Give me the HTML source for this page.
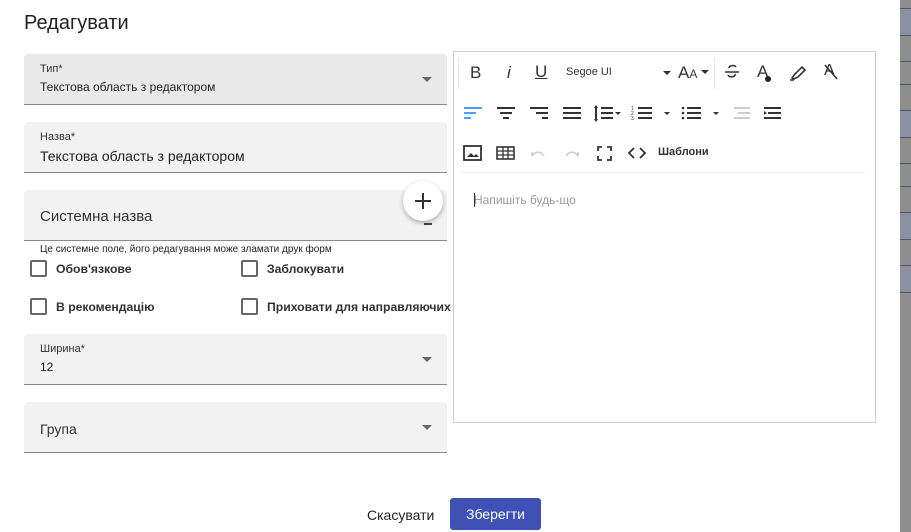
<!DOCTYPE html>
<html><head><meta charset="utf-8"><style>
*{box-sizing:border-box}
body{margin:0;width:911px;height:532px;overflow:hidden;background:#fff;font-family:"Liberation Sans",Arial,sans-serif;color:#212121;position:relative}
.strip{position:absolute;left:900px;top:0;width:11px;height:532px;background:#8e8e8e}
.strip i{position:absolute;left:0;width:11px;height:1px;background:#4d5670}
.strip b{position:absolute;left:0;width:11px;background:#8b919e}
h1{position:absolute;left:24px;top:12px;margin:0;font-size:20px;font-weight:400;color:#212121}
.f{position:absolute;left:24px;width:423px;height:51px;background:#f2f2f2;border-bottom:1px solid #8a8a8a;border-radius:4px 4px 0 0}
.f .l{position:absolute;left:16px;top:9px;font-size:11px;color:#333}
.f .v{position:absolute;left:16px;top:26px;font-size:13px;color:#222}
.f .p{position:absolute;left:16px;top:18px;font-size:15px;color:#333}
.arr{position:absolute;right:15px;top:23px;width:0;height:0;border-left:5px solid transparent;border-right:5px solid transparent;border-top:5px solid #666}
.cb{position:absolute;width:17px;height:17px;border:2px solid #666;border-radius:2px}
.cl{position:absolute;font-size:12.2px;font-weight:bold;color:#333}
.ed{position:absolute;left:453px;top:51px;width:423px;height:372px;border:1px solid #cfcfcf}
.tb{position:absolute;font-size:18px;color:#333}
svg{position:absolute}
.fab{position:absolute;left:403px;top:181px;width:40px;height:40px;border-radius:50%;background:#fff;box-shadow:0 2px 5px rgba(0,0,0,.3)}
</style></head><body>
<div class="strip">
<b style="top:8px;height:27px"></b><b style="top:110px;height:27px"></b><b style="top:212px;height:27px"></b><b style="top:265px;height:27px"></b>
<i style="top:8px"></i><i style="top:35px"></i><i style="top:61px"></i><i style="top:84px"></i><i style="top:110px"></i><i style="top:137px"></i><i style="top:163px"></i><i style="top:186px"></i><i style="top:212px"></i><i style="top:239px"></i><i style="top:265px"></i><i style="top:292px"></i>
</div>
<h1>Редагувати</h1>
<div class="f" style="top:54px;background:#e9e9e9"><div class="l">Тип*</div><div class="v" style="font-size:12px">Текстова область з редактором</div><div class="arr"></div></div>
<div class="f" style="top:122px"><div class="l">Назва*</div><div class="v" style="font-size:14px">Текстова область з редактором</div></div>
<div class="f" style="top:190px"><div class="p">Системна назва</div><div style="position:absolute;right:15px;top:33px;width:8px;height:2px;background:#444"></div></div>
<div style="position:absolute;left:40px;top:244px;font-size:10px;color:#222">Це системне поле, його редагування може зламати друк форм</div>
<div class="fab"><svg width="40" height="40"><path d="M20 12v16M12 20h16" stroke="#333" stroke-width="2"/></svg></div>
<div class="cb" style="left:30px;top:260px"></div><div class="cl" style="left:56px;top:262px">Обов'язкове</div>
<div class="cb" style="left:241px;top:260px"></div><div class="cl" style="left:267px;top:262px">Заблокувати</div>
<div class="cb" style="left:30px;top:298px"></div><div class="cl" style="left:56px;top:300px">В рекомендацію</div>
<div class="cb" style="left:241px;top:298px"></div><div class="cl" style="left:267px;top:300px">Приховати для направляючих</div>
<div class="f" style="top:334px"><div class="l">Ширина*</div><div class="v" style="font-size:12px">12</div><div class="arr"></div></div>
<div class="f" style="top:402px"><div class="p" style="font-size:14px;top:19px">Група</div><div class="arr"></div></div>
<div class="ed">
<div style="position:absolute;left:4px;top:5px;width:1px;height:32px;background:#e5e5e5"></div>
<div style="position:absolute;left:260px;top:5px;width:1px;height:32px;background:#e5e5e5"></div>
<div class="tb" style="left:16px;top:11px;font-size:17px">B</div>
<div class="tb" style="left:53px;top:11px;font-style:italic;font-size:17px">i</div>
<div class="tb" style="left:81px;top:10px;text-decoration:underline;font-size:17px">U</div>
<div class="tb" style="left:112px;top:14px;font-size:11px">Segoe UI</div>
<div class="arr" style="right:auto;left:209px;top:19px;border-top-color:#333;border-width:4px 4px 0"></div>
<div class="tb" style="left:224px;top:11px;font-size:17px">A<span style="font-size:12px">A</span></div>
<div class="arr" style="right:auto;left:247px;top:18px;border-top-color:#333;border-width:4px 4px 0"></div>
<svg style="left:268px;top:11px" width="20" height="18"><path d="M3 9h14M14 4c-1-2-7-2-7 1M13 11c1 3-6 4-7 1" stroke="#333" stroke-width="1.6" fill="none"/></svg>
<div class="tb" style="left:303px;top:10px;font-size:17px">A</div><div style="position:absolute;left:311px;top:24px;width:6px;height:6px;border-radius:50%;background:#222"></div>
<svg style="left:334px;top:12px" width="20" height="18"><path d="M4 14l3-4 7-7 3 3-7 7-4 2zM2 16h4" stroke="#333" stroke-width="1.6" fill="none"/></svg>
<div class="tb" style="left:370px;top:10px;font-size:16px">A</div><svg style="left:368px;top:11px" width="18" height="18"><path d="M3 2l12 14" stroke="#333" stroke-width="1.5"/></svg>
<svg style="left:8px;top:52px" width="400" height="20">
<g stroke-width="2"><path d="M2 4h18M2 9h12M2 14h7" stroke="#4a9df5"/>
<g stroke="#333"><path d="M35 4h18M38 9h12M41 14h6M68 4h18M74 9h12M80 14h6M101 4h18M101 9h18M101 14h18M139 4h12M139 9h12M139 14h12M134 2v15"/>
<path d="M176 4h14M176 9h14M176 14h14M225 4h14M225 9h14M225 14h14M302 4h17M306 9h13M302 14h17"/></g>
<path d="M272 4h16M276 9h12M272 14h16" stroke="#ccc"/></g>
<path d="M153 8l3 3 3-3zM202 8l3 3 3-3zM251 8l3 3 3-3zM132 4l2-3 2 3zM132 15l2 3 2-3z" fill="#333"/>
<text x="169" y="6" font-size="5" fill="#333">1</text><text x="169" y="11" font-size="5" fill="#333">2</text><text x="169" y="16" font-size="5" fill="#333">3</text>
<circle cx="221" cy="4" r="1.3" fill="#333"/><circle cx="221" cy="9" r="1.3" fill="#333"/><circle cx="221" cy="14" r="1.3" fill="#333"/>
<path d="M302 7l3 2-3 2z" fill="#333"/>
</svg>
<svg style="left:8px;top:92px" width="260" height="20">
<rect x="2" y="2" width="17" height="14" fill="none" stroke="#333" stroke-width="1.8"/><path d="M5 13l4-4 3 3 2-2 3 3z" fill="#333"/>
<rect x="35" y="3" width="17" height="12" fill="none" stroke="#333" stroke-width="1.6"/><path d="M35 7h17M35 11h17M41 3v12M46 3v12" stroke="#333" stroke-width="1.3"/>
<path d="M70 12c3-5 9-5 12 0M70 12V8" stroke="#ccc" stroke-width="1.6" fill="none"/><path d="M116 12c-3-5-9-5-12 0M116 12V8" stroke="#ccc" stroke-width="1.6" fill="none"/>
<path d="M136 7V3h4M145 3h4v4M149 12v4h-4M140 16h-4v-4" stroke="#333" stroke-width="1.8" fill="none"/>
<path d="M172 4l-5 5 5 5M178 4l5 5-5 5" stroke="#333" stroke-width="1.8" fill="none"/>
</svg>
<div class="tb" style="left:204px;top:94px;font-size:11px;font-weight:bold">Шаблони</div>
<div style="position:absolute;left:8px;top:120px;width:403px;height:1px;background:#eee"></div>
<div style="position:absolute;left:20px;top:141px;width:1px;height:14px;background:#333"></div>
<div style="position:absolute;left:20px;top:141px;font-size:12px;color:#999">Напишіть будь-що</div>
</div>
<div style="position:absolute;left:367px;top:507px;font-size:14px;color:#222">Скасувати</div>
<div style="position:absolute;left:450px;top:498px;width:91px;height:32px;background:#3f51b5;border-radius:3px;color:#fff;font-size:14px;text-align:center;line-height:32px">Зберегти</div>
</body></html>
